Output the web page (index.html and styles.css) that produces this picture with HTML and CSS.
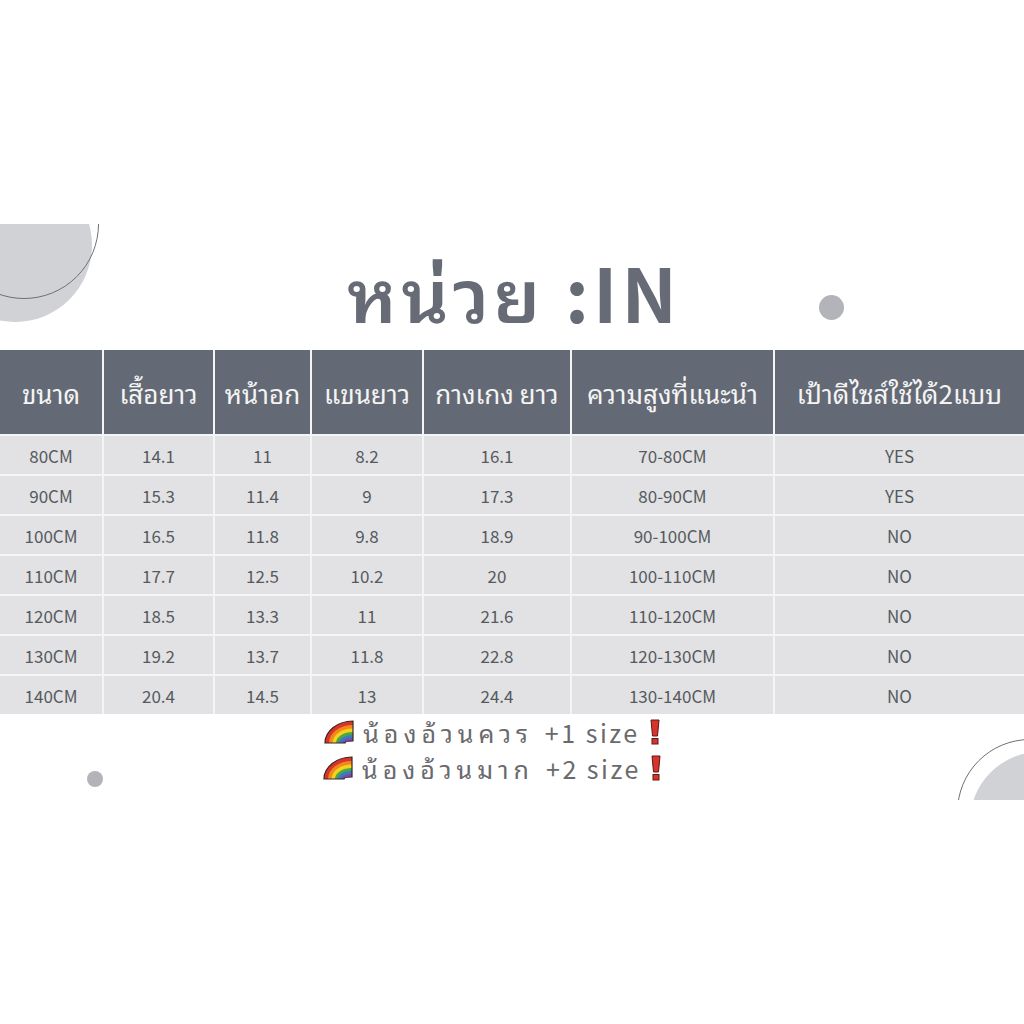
FILE: index.html
```html
<!DOCTYPE html>
<html lang="th">
<head>
<meta charset="utf-8">
<title>ตารางไซส์</title>
<link rel="stylesheet" href="styles.css">
</head>
<body>
<div class="page">
  <div class="deco deco-tl">
    <div class="deco-tl-fill"></div>
    <div class="deco-tl-ring"></div>
  </div>
  <div class="deco deco-br">
    <div class="deco-br-fill"></div>
    <div class="deco-br-ring"></div>
  </div>
  <div class="dot dot-right"></div>
  <div class="dot dot-left"></div>

  <h1 class="title">หน่วย :IN</h1>

  <div class="size-table">
    <div class="th">ขนาด</div>
    <div class="th">เสื้อยาว</div>
    <div class="th">หน้าอก</div>
    <div class="th">แขนยาว</div>
    <div class="th">กางเกง ยาว</div>
    <div class="th">ความสูงที่แนะนำ</div>
    <div class="th">เป้าดีไซส์ใช้ได้2แบบ</div>

    <div class="td">80CM</div><div class="td">14.1</div><div class="td">11</div><div class="td">8.2</div><div class="td">16.1</div><div class="td">70-80CM</div><div class="td">YES</div>
    <div class="td">90CM</div><div class="td">15.3</div><div class="td">11.4</div><div class="td">9</div><div class="td">17.3</div><div class="td">80-90CM</div><div class="td">YES</div>
    <div class="td">100CM</div><div class="td">16.5</div><div class="td">11.8</div><div class="td">9.8</div><div class="td">18.9</div><div class="td">90-100CM</div><div class="td">NO</div>
    <div class="td">110CM</div><div class="td">17.7</div><div class="td">12.5</div><div class="td">10.2</div><div class="td">20</div><div class="td">100-110CM</div><div class="td">NO</div>
    <div class="td">120CM</div><div class="td">18.5</div><div class="td">13.3</div><div class="td">11</div><div class="td">21.6</div><div class="td">110-120CM</div><div class="td">NO</div>
    <div class="td">130CM</div><div class="td">19.2</div><div class="td">13.7</div><div class="td">11.8</div><div class="td">22.8</div><div class="td">120-130CM</div><div class="td">NO</div>
    <div class="td">140CM</div><div class="td">20.4</div><div class="td">14.5</div><div class="td">13</div><div class="td">24.4</div><div class="td">130-140CM</div><div class="td">NO</div>
  </div>

  <div class="notes">
    <div class="note">
      <svg class="rainbow" viewBox="0 0 30 24" aria-hidden="true">
        <path d="M29 1 A28 22 0 0 0 1 23 L29 23 Z" fill="#d8342a"/>
        <path d="M29 5 A24 18 0 0 0 5 23 L29 23 Z" fill="#f08a1c"/>
        <path d="M29 8.5 A20.5 14.5 0 0 0 8.5 23 L29 23 Z" fill="#f6d21e"/>
        <path d="M29 12 A17 11 0 0 0 12 23 L29 23 Z" fill="#4aa843"/>
        <path d="M29 15 A14 8 0 0 0 15 23 L29 23 Z" fill="#3b78c8"/>
        <path d="M29 18 A11 5 0 0 0 18 23 L29 23 Z" fill="#7a4aa8"/>
        <path d="M29 21 A8 2 0 0 0 21 23 L29 23 Z" fill="#ffffff"/>
        <path d="M29 1 A28 22 0 0 0 1 23 L21 23 A8 2 0 0 1 29 21 Z" fill="none" stroke="#3a2626" stroke-width="1.2"/>
      </svg>
      <span class="note-th">น้องอ้วนควร</span><span class="note-en">+1 size</span>
      <svg class="bang" viewBox="0 0 14 26" aria-hidden="true">
        <path d="M3 1 H11 L9.5 17 H4.5 Z" fill="#d8342a" stroke="#5a1a1a" stroke-width="1"/>
        <rect x="4" y="19.5" width="6" height="5.5" fill="#d8342a" stroke="#5a1a1a" stroke-width="1"/>
      </svg>
    </div>
    <div class="note">
      <svg class="rainbow" viewBox="0 0 30 24" aria-hidden="true">
        <path d="M29 1 A28 22 0 0 0 1 23 L29 23 Z" fill="#d8342a"/>
        <path d="M29 5 A24 18 0 0 0 5 23 L29 23 Z" fill="#f08a1c"/>
        <path d="M29 8.5 A20.5 14.5 0 0 0 8.5 23 L29 23 Z" fill="#f6d21e"/>
        <path d="M29 12 A17 11 0 0 0 12 23 L29 23 Z" fill="#4aa843"/>
        <path d="M29 15 A14 8 0 0 0 15 23 L29 23 Z" fill="#3b78c8"/>
        <path d="M29 18 A11 5 0 0 0 18 23 L29 23 Z" fill="#7a4aa8"/>
        <path d="M29 21 A8 2 0 0 0 21 23 L29 23 Z" fill="#ffffff"/>
        <path d="M29 1 A28 22 0 0 0 1 23 L21 23 A8 2 0 0 1 29 21 Z" fill="none" stroke="#3a2626" stroke-width="1.2"/>
      </svg>
      <span class="note-th">น้องอ้วนมาก</span><span class="note-en">+2 size</span>
      <svg class="bang" viewBox="0 0 14 26" aria-hidden="true">
        <path d="M3 1 H11 L9.5 17 H4.5 Z" fill="#d8342a" stroke="#5a1a1a" stroke-width="1"/>
        <rect x="4" y="19.5" width="6" height="5.5" fill="#d8342a" stroke="#5a1a1a" stroke-width="1"/>
      </svg>
    </div>
  </div>
</div>
</body>
</html>
```
FILE: styles.css
```css
html, body {
  margin: 0;
  padding: 0;
  background: #ffffff;
}

.page {
  position: relative;
  width: 1024px;
  height: 1024px;
  overflow: hidden;
  font-family: "Noto Sans CJK SC", "Noto Sans Thai Looped", "Noto Serif Thai", "Loma", "Garuda", "Waree", "Sawasdee", "Noto Sans Thai", "Noto Sans", sans-serif;
  padding-top: 246px;
  box-sizing: border-box;
}

/* decorations */
.deco {
  position: absolute;
  overflow: hidden;
}
.deco-tl {
  left: 0;
  top: 224px;
  width: 110px;
  height: 110px;
}
.deco-tl-fill {
  position: absolute;
  left: -62px;
  top: -56px;
  width: 154px;
  height: 154px;
  border-radius: 50%;
  background: #d0d2d6;
}
.deco-tl-ring {
  position: absolute;
  left: -51px;
  top: -75px;
  width: 150px;
  height: 150px;
  border-radius: 50%;
  border: 1.5px solid #6e7078;
  box-sizing: border-box;
}
.deco-br {
  left: 940px;
  top: 720px;
  width: 84px;
  height: 80px;
}
.deco-br-fill {
  position: absolute;
  left: 30px;
  top: 32px;
  width: 140px;
  height: 140px;
  border-radius: 50%;
  background: #d0d2d6;
}
.deco-br-ring {
  position: absolute;
  left: 17px;
  top: 19px;
  width: 146px;
  height: 146px;
  border-radius: 50%;
  border: 1.5px solid #6e7078;
  box-sizing: border-box;
}
.dot {
  position: absolute;
  border-radius: 50%;
  background: #b2b4ba;
}
.dot-right {
  left: 819px;
  top: 295px;
  width: 25px;
  height: 25px;
}
.dot-left {
  left: 87px;
  top: 771px;
  width: 16px;
  height: 16px;
}

/* title */
.title {
  position: relative;
  margin: 0;
  text-align: center;
  font-size: 74px;
  line-height: 90px;
  font-weight: 600;
  color: #676b76;
  letter-spacing: 4px;
  padding-left: 4px;
}

/* table */
.size-table {
  position: relative;
  margin-top: 14px;
  display: grid;
  grid-template-columns: 102px 109px 95px 110px 146px 201px 1fr;
  grid-template-rows: 84px repeat(7, 38px);
  column-gap: 2px;
  row-gap: 2px;
  background: #f4f4f5;
  width: 1024px;
}
.th {
  background: #646a75;
  color: #f4f4f4;
  font-size: 26px;
  display: flex;
  align-items: center;
  justify-content: center;
  white-space: nowrap;
  overflow: visible;
}
.td {
  background: #e2e2e4;
  color: #555a60;
  font-size: 17px;
  display: flex;
  align-items: center;
  justify-content: center;
  white-space: nowrap;
}

/* notes */
.notes {
  position: relative;
  margin-top: 0;
  display: flex;
  flex-direction: column;
  align-items: center;
  padding-right: 38px;
}
.note {
  display: flex;
  align-items: center;
  height: 36px;
  color: #6a6a6e;
  font-size: 25px;
}
.rainbow {
  width: 30px;
  height: 24px;
  margin-right: 9px;
}
.note-th {
  letter-spacing: 5px;
  margin-right: 12px;
}
.note-en {
  letter-spacing: 2.5px;
}
.bang {
  width: 14px;
  height: 26px;
  margin-left: 8px;
}
```
